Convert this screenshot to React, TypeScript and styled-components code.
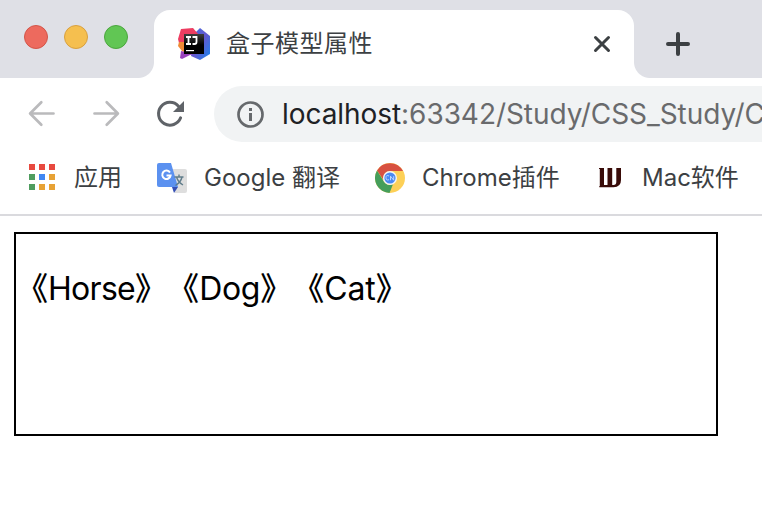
import React from 'react';
import styled, { createGlobalStyle } from 'styled-components';

const GlobalStyle = createGlobalStyle`
  * { box-sizing: border-box; }
  body {
    margin: 0;
    background: #fff;
    overflow: hidden;
    font-family: Inter, "Noto Sans CJK SC", sans-serif;
    color: #3c4043;
  }
  svg { display: block; flex: none; }
`;

const Window = styled.div`
  width: 762px;
  height: 528px;
  overflow: hidden;
  background: #fff;
`;

const TabStrip = styled.header`
  display: flex;
  height: 78px;
  background: #dfe0e6;
`;

const WindowControls = styled.div`
  display: flex;
  gap: 16px;
  width: 138px;
  padding: 25px 0 0 24px;
`;

const ControlDot = styled.span<{ $fill: string; $edge: string }>`
  width: 24px;
  height: 24px;
  border-radius: 50%;
  border: 1px solid ${(p) => p.$edge};
  background: ${(p) => p.$fill};
`;

const TabFlare = styled.span<{ $side: 'left' | 'right' }>`
  align-self: flex-end;
  width: 16px;
  height: 16px;
  background: radial-gradient(
    circle at ${(p) => (p.$side === 'left' ? '0 0' : '100% 0')},
    transparent 15.5px,
    #fff 16.5px
  );
`;

const Tab = styled.div`
  display: flex;
  align-items: center;
  width: 480px;
  height: 68px;
  margin-top: 10px;
  padding: 0 22px 0 24px;
  border-radius: 16px 16px 0 0;
  background: #fff;
`;

const TabTitle = styled.span`
  flex: 1;
  margin-left: 16px;
  font-size: 24px;
  line-height: 36px;
  letter-spacing: 0.5px;
  white-space: nowrap;
`;

const NewTab = styled.div`
  padding: 32px 0 0 16px;
`;

const Toolbar = styled.nav`
  display: flex;
  align-items: center;
  height: 72px;
  padding-left: 28px;
`;

const NavIcons = styled.div`
  display: flex;
  align-items: center;
  gap: 36px;
  width: 186px;
`;

const AddressBar = styled.div`
  display: flex;
  align-items: center;
  flex: 1;
  height: 56px;
  padding-left: 22px;
  overflow: hidden;
  border-radius: 28px 0 0 28px;
  background: #f1f3f4;
`;

const Url = styled.span`
  margin-left: 18px;
  font-size: 28px;
  line-height: 40px;
  letter-spacing: -0.06px;
  white-space: nowrap;
  color: #696a6c;
`;

const UrlHost = styled.span`
  color: #202124;
`;

const Bookmarks = styled.nav`
  display: flex;
  align-items: center;
  height: 66px;
  padding: 0 0 8px 28px;
  border-bottom: 2px solid #dadade;
`;

const Bookmark = styled.div<{ $width: number }>`
  display: flex;
  align-items: center;
  flex: none;
  width: ${(p) => p.$width}px;
`;

const BookmarkLabel = styled.span<{ $gap: number }>`
  margin-left: ${(p) => p.$gap}px;
  font-size: 24px;
  line-height: 36px;
  white-space: nowrap;
`;

const Page = styled.main`
  padding: 16px 0 0 14px;
`;

const Box = styled.section`
  width: 704px;
  height: 204px;
  padding-top: 28px;
  border: 2px solid #000;
`;

const Animals = styled.p`
  display: flex;
  margin: 0;
  font-size: 32px;
  line-height: 48px;
  white-space: nowrap;
  color: #000;
`;

const Animal = styled.span<{ $tracking: number }>`
  font-weight: 500;
  font-family: "Noto Sans CJK SC", sans-serif;
  text-spacing-trim: space-all;

  b {
    font-family: Inter, sans-serif;
    font-weight: 400;
    letter-spacing: ${(p) => p.$tracking}px;
  }
`;

const IdeIcon = () => (
  <svg width="32" height="32" viewBox="0 0 32 32">
    <defs>
      <linearGradient id="ideBlue" x1="0" y1="0" x2="1" y2="1">
        <stop offset="0" stopColor="#3f6ee0" />
        <stop offset=".5" stopColor="#6559cf" />
        <stop offset="1" stopColor="#1686ee" />
      </linearGradient>
      <linearGradient id="ideBlack" x1="0" y1="0" x2="0" y2="1">
        <stop offset="0" stopColor="#3d3d3d" />
        <stop offset=".55" stopColor="#000" />
      </linearGradient>
    </defs>
    <path d="M17 5 22 0 32 8v18l-10 6-9-4z" fill="url(#ideBlue)" />
    <path d="M3 1 15 0l6 7-4 14L1 15 0 11z" fill="#ed3d61" />
    <path d="M1 14h8v12l-5-3-4-5z" fill="#f08a35" />
    <path d="m3 23 13 3-4 1-8 4-2-1z" fill="#9a43bd" />
    <path d="M6 6h20v20H6z" fill="url(#ideBlack)" />
    <path d="M8 9h5M10.500 9v7M8 16h5M14.500 9h4v5q0 2-2 2h-2" fill="none" stroke="#fff" strokeWidth="1.800" />
    <path d="M8 22h8v1.200H8z" fill="#fff" />
  </svg>
);

const CloseIcon = () => (
  <svg width="20" height="20" viewBox="0 0 20 20">
    <path d="m3.500 3.500 13 13m0-13-13 13" stroke="#3c4043" strokeWidth="3" strokeLinecap="round" />
  </svg>
);

const PlusIcon = () => (
  <svg width="24" height="24" viewBox="0 0 24 24">
    <path d="M12 2v20M2 12h20" stroke="#3c4043" strokeWidth="4" strokeLinecap="round" />
  </svg>
);

const ArrowIcon = ({ forward = false }: { forward?: boolean }) => (
  <svg width="28" height="28" viewBox="0 0 28 28">
    <path
      d={forward ? 'M2.500 13.500h23M14.700 2.300l11.200 11.200-11.200 11.200' : 'M25.500 13.500h-23M13.300 2.300 2.100 13.500l11.200 11.200'}
      fill="none"
      stroke="#bababc"
      strokeWidth="2.700"
      strokeLinecap="round"
      strokeLinejoin="round"
    />
  </svg>
);

const ReloadIcon = () => (
  <svg width="28" height="28" viewBox="0 0 28 28">
    <path d="M24.600 17.800A11.400 11.400 0 1 1 22.500 6.200" fill="none" stroke="#5f6368" strokeWidth="3" strokeLinecap="round" />
    <path d="M28 1v11H17z" fill="#5f6368" />
  </svg>
);

const InfoIcon = () => (
  <svg width="28" height="28" viewBox="0 0 28 28">
    <circle cx="14.500" cy="14.500" r="12" fill="none" stroke="#66696c" strokeWidth="2.700" />
    <path d="M13 8h3v3h-3zM13 13h3v8h-3z" fill="#66696c" />
  </svg>
);

const APP_COLORS = ['#e8493f', '#e8493f', '#e8493f', '#4f9d5f', '#4087f3', '#e7a235', '#4f9d5f', '#e7a235', '#e7a235'];

const AppsIcon = () => (
  <svg width="28" height="28" viewBox="0 0 28 28">
    {APP_COLORS.map((color, i) => (
      <rect key={i} x={1 + (i % 3) * 10} y={Math.floor(i / 3) * 10} width="6" height="6" fill={color} />
    ))}
  </svg>
);

const TranslateIcon = () => (
  <svg width="32" height="32" viewBox="0 0 32 32">
    <path d="M16 7h13q2 0 2 2v20q0 2-2 2H19z" fill="#dedede" />
    <path d="M16 25h6l-4 6z" fill="#354fb4" />
    <path d="M3 1h12l7 24H3q-2 0-2-2V3q0-2 2-2z" fill="#5b91f0" />
    <path d="M14 10.500a4.200 4.200 0 1 0 .6 3H10.500" fill="none" stroke="#fff" strokeWidth="2" />
    <path d="M18.500 15h9M23 12.500V15M26 15q-1 5-6.500 8.500M20.500 15q1.500 5 6.500 8" fill="none" stroke="#607d8b" strokeWidth="1.400" />
  </svg>
);

const ChromeIcon = () => (
  <svg width="30" height="30" viewBox="0 0 30 30">
    <circle cx="15" cy="15" r="15" fill="#fdd057" />
    <path d="M2 7.500A15 15 0 0 1 28 8H15a7 7 0 0 0-6.500 9z" fill="#d85140" />
    <path d="M2 7.500 8.900 18.500A7 7 0 0 0 18 21.300L14.500 30A15 15 0 0 1 2 7.500z" fill="#459e5b" />
    <circle cx="15" cy="15" r="7" fill="#f4f5f7" />
    <circle cx="15" cy="15" r="5.600" fill="#4a89f3" />
    <path d="M14 13q-3-1.500-3 1.700t3 2M15.500 17.200v-4l3.200 4v-4" fill="none" stroke="#c5dbff" strokeWidth=".9" />
  </svg>
);

const MacSoftwareIcon = () => (
  <svg width="22" height="20" viewBox="0 0 22 20">
    <path
      d="M0 0h5v17h3.500V0h4.700v17h1.300q2.800 0 2.800-3V0H22v12q0 7.200-7.500 7.200H.3v-1.200H.8V1H0z"
      fill="#390b08"
    />
  </svg>
);

export default function App() {
  return (
    <Window>
      <GlobalStyle />
      <TabStrip>
        <WindowControls>
          <ControlDot $fill="#ed6a5e" $edge="#d35549" />
          <ControlDot $fill="#f5bf4f" $edge="#d8a040" />
          <ControlDot $fill="#61c654" $edge="#4ba63e" />
        </WindowControls>
        <TabFlare $side="left" />
        <Tab>
          <IdeIcon />
          <TabTitle>盒子模型属性</TabTitle>
          <CloseIcon />
        </Tab>
        <TabFlare $side="right" />
        <NewTab>
          <PlusIcon />
        </NewTab>
      </TabStrip>
      <Toolbar>
        <NavIcons>
          <ArrowIcon />
          <ArrowIcon forward />
          <ReloadIcon />
        </NavIcons>
        <AddressBar>
          <InfoIcon />
          <Url>
            <UrlHost>localhost</UrlHost>:63342/Study/CSS_Study/C
          </Url>
        </AddressBar>
      </Toolbar>
      <Bookmarks>
        <Bookmark $width={128}>
          <AppsIcon />
          <BookmarkLabel $gap={18}>应用</BookmarkLabel>
        </Bookmark>
        <Bookmark $width={219}>
          <TranslateIcon />
          <BookmarkLabel $gap={16}>Google 翻译</BookmarkLabel>
        </Bookmark>
        <Bookmark $width={224}>
          <ChromeIcon />
          <BookmarkLabel $gap={17}>Chrome插件</BookmarkLabel>
        </Bookmark>
        <Bookmark $width={140}>
          <MacSoftwareIcon />
          <BookmarkLabel $gap={21}>Mac软件</BookmarkLabel>
        </Bookmark>
      </Bookmarks>
      <Page>
        <Box>
          <Animals>
            <Animal $tracking={-0.7}>《<b>Horse</b>》</Animal>
            <Animal $tracking={-0.3}>《<b>Dog</b>》</Animal>
            <Animal $tracking={-0.1}>《<b>Cat</b>》</Animal>
          </Animals>
        </Box>
      </Page>
    </Window>
  );
}
